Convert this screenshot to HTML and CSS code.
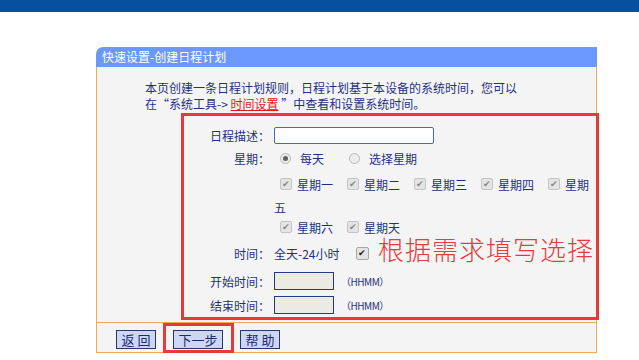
FILE: index.html
```html
<!DOCTYPE html>
<html lang="zh-CN">
<head>
    <meta charset="UTF-8">
    <title>快速设置-创建日程计划</title>
    <link rel="stylesheet" href="styles.css">
</head>
<body>
    <div class="topbar"></div>
    <div class="panel">
        <div class="panel-head">快速设置-创建日程计划</div>
        <div class="panel-body">
            <p class="intro">本页创建一条日程计划规则，日程计划基于本设备的系统时间，您可以<br>在<span class="q">“</span>系统工具-&gt; <a class="link">时间设置</a> <span class="q">”</span>中查看和设置系统时间。</p>
            <div class="mark">
                <div class="row r1">
                    <span class="lbl">日程描述：</span>
                    <span class="txt"></span>
                </div>
                <div class="row r2">
                    <span class="lbl">星期：</span>
                    <span class="radio on"></span><span class="rtext">每天</span>
                    <span class="radio"></span><span class="rtext">选择星期</span>
                </div>
                <div class="row r3 days">
                    <span class="day"><span class="cb">✔</span>星期一</span>
                    <span class="day"><span class="cb">✔</span>星期二</span>
                    <span class="day"><span class="cb">✔</span>星期三</span>
                    <span class="day"><span class="cb">✔</span>星期四</span>
                    <span class="day"><span class="cb">✔</span>星期</span>
                </div>
                <div class="row r4 days"><span class="wrap">五</span></div>
                <div class="row r5 days">
                    <span class="day"><span class="cb">✔</span>星期六</span>
                    <span class="day"><span class="cb">✔</span>星期天</span>
                </div>
                <div class="row r6">
                    <span class="lbl">时间：</span>
                    <span>全天-24小时</span>
                    <span class="cb dark">✔</span>
                </div>
                <div class="row r7">
                    <span class="lbl">开始时间：</span>
                    <span class="txt short"></span>
                    <span class="fmt">（HHMM）</span>
                </div>
                <div class="row r8">
                    <span class="lbl">结束时间：</span>
                    <span class="txt short"></span>
                    <span class="fmt">（HHMM）</span>
                </div>
                <div class="note">根据需求填写选择</div>
            </div>
        </div>
        <div class="panel-foot">
            <button class="btn">返 回</button>
            <span class="hl"><button class="btn wide">下一步</button></span>
            <button class="btn">帮 助</button>
        </div>
    </div>
</body>
</html>
```

FILE: styles.css
```css
body {
    margin: 0;
    background: #fff;
    font-family: "Noto Sans CJK SC", "Liberation Sans", sans-serif;
    font-size: 12px;
    color: #1e3282;
}
.topbar {
    height: 12px;
    background: #0650a0;
}
.panel {
    margin: 35px 0 0 96px;
    width: 501px;
}
.panel-head {
    height: 20px;
    line-height: 20px;
    background: #6a98fc;
    color: #fff;
    padding-left: 6px;
    border-top-left-radius: 7px;
}
.panel-body {
    background: #f4f4f4;
    border-left: 1px solid #f2aa52;
    border-right: 1px solid #f2aa52;
    padding: 13px 0 2px;
}
.intro {
    margin: 0 0 1px 48px;
    line-height: 16px;
}
.q {
    display: inline-block;
    width: 12px;
    text-align: center;
}
.link {
    color: #e01818;
    text-decoration: underline;
}
.mark {
    position: relative;
    margin-left: 84px;
    width: 418px;
    height: 207px;
    box-sizing: border-box;
    border: 3px solid #e63a3a;
    padding-top: 10px;
}
.row {
    display: flex;
    align-items: center;
    height: 18px;
    white-space: nowrap;
}
.r2 { margin-top: 5px; }
.r3 { margin-top: 8px; }
.r4 { margin-top: 5px; }
.r5 { margin-top: 2px; }
.r6 { margin-top: 8px; }
.r7 { margin-top: 10px; }
.r8 { margin-top: 6px; }
.lbl {
    width: 86px;
    text-align: right;
    margin-right: 4px;
}
.txt {
    width: 160px;
    height: 17px;
    box-sizing: border-box;
    background: #fff;
    border: 1px solid #3d6ac4;
    border-radius: 2px;
}
.txt.short {
    width: 60px;
    height: 18px;
    background: #ebebe4;
    border: 1px solid #203c84;
    border-radius: 0;
}
.fmt {
    margin-left: 7px;
    font-size: 10px;
    letter-spacing: -0.5px;
}
.radio {
    width: 11px;
    height: 11px;
    box-sizing: border-box;
    border: 1px solid #b8b8b8;
    border-radius: 50%;
    background: #ececec;
    margin-left: 6px;
    position: relative;
}
.radio.on::after {
    content: "";
    position: absolute;
    left: 2px;
    top: 2px;
    width: 5px;
    height: 5px;
    border-radius: 50%;
    background: #606060;
}
.rtext {
    margin-left: 9px;
    margin-right: 19px;
}
.days {
    padding-left: 93px;
}
.day {
    display: flex;
    align-items: center;
    margin-right: 14px;
}
.cb {
    width: 12px;
    height: 12px;
    box-sizing: border-box;
    border: 1px solid #c4c4c4;
    border-radius: 2px;
    background: #e4e4e4;
    color: #8a8a8a;
    font-size: 9px;
    line-height: 10px;
    text-align: center;
    margin: 0 5px 0 0;
}
.days .day:first-child {
    margin-left: 3px;
}
.cb.dark {
    width: 13px;
    height: 13px;
    color: #222;
    border-color: #a8a8a8;
    margin-left: 16px;
}
.wrap {
    margin-left: -3px;
}
.note {
    position: absolute;
    left: 194px;
    top: 120px;
    font-size: 26px;
    line-height: 26px;
    color: #e23c3c;
    font-weight: 300;
    letter-spacing: 1px;
}
.panel-foot {
    display: flex;
    align-items: flex-start;
    height: 29px;
    border: 1px solid #f2aa52;
    background: #f4f4f4;
    padding-left: 19px;
}
.btn {
    margin-top: 7px;
    height: 19px;
    padding: 0;
    width: 40px;
    font-family: "Noto Sans CJK SC", sans-serif;
    font-size: 13px;
    line-height: 17px;
    color: #1e2a6a;
    background: #ccd6f8;
    border: 1px solid #2a3568;
    border-radius: 0;
}
.btn.wide {
    width: 50px;
    margin-top: 4px;
}
.hl {
    box-sizing: border-box;
    height: 30px;
    margin: 0 6px 0 7px;
    padding: 0 8px 0 7px;
    border: 3px solid #e63a3a;
}
```
